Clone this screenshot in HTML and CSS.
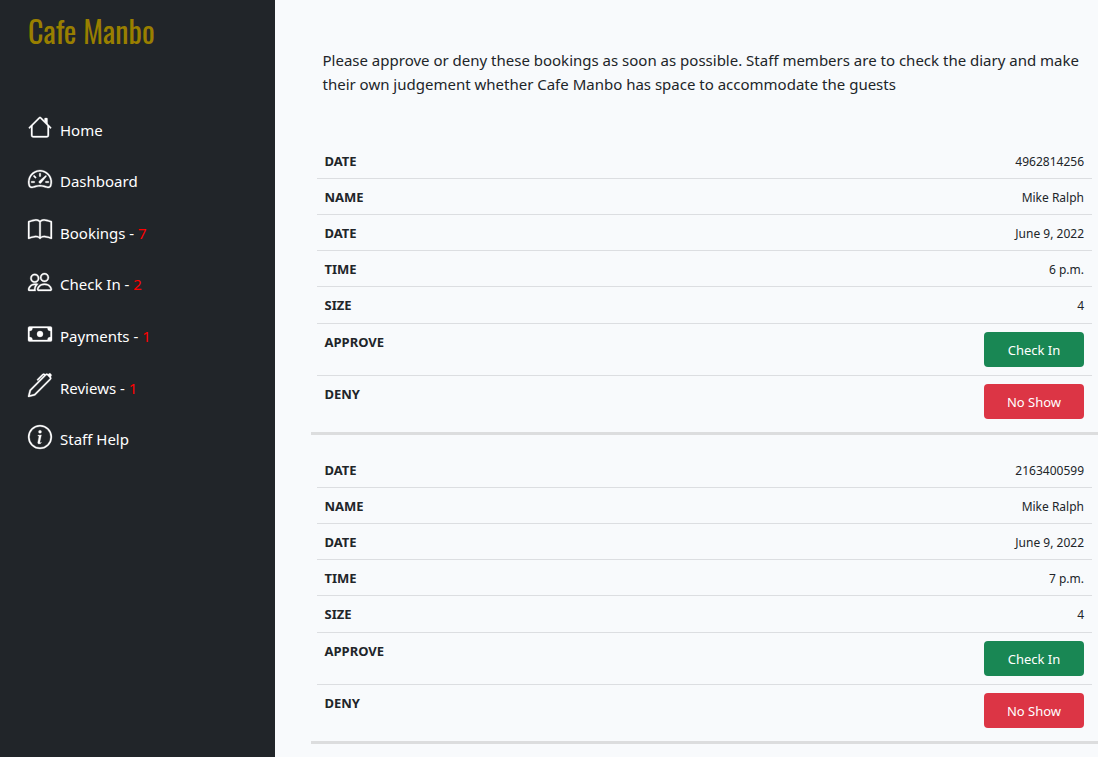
FILE: index.html
```html
<!DOCTYPE html>
<html lang="en">
<head>
<meta charset="utf-8">
<meta name="viewport" content="width=device-width, initial-scale=1">
<title>Cafe Manbo</title>
<link rel="stylesheet" href="styles.css">
</head>
<body class="page">
<aside class="sidebar">
  <a class="brand" href="#">Cafe Manbo</a>
  <nav>
    <ul class="menu">
      <li><a class="menu-link" href="#"><svg class="icon" viewBox="0 0 16 16" aria-hidden="true"><path fill-rule="evenodd" d="M2 13.5V7h1v6.500a.5.5 0 0 0 .5.5h9a.5.5 0 0 0 .5-.5V7h1v6.500a1.500 1.500 0 0 1-1.500 1.500h-9A1.500 1.500 0 0 1 2 13.500zm11-11V6l-2-2V2.500a.5.5 0 0 1 .5-.5h1a.5.5 0 0 1 .5.5z"/><path fill-rule="evenodd" d="M7.293 1.500a1 1 0 0 1 1.414 0l6.647 6.646a.5.5 0 0 1-.708.708L8 2.207 1.354 8.854a.5.5 0 1 1-.708-.708L7.293 1.500z"/></svg><span>Home</span></a></li>
      <li><a class="menu-link" href="#"><svg class="icon" viewBox="0 0 16 16" aria-hidden="true"><path d="M8 4a.5.5 0 0 1 .5.5V6a.5.5 0 0 1-1 0V4.500A.5.5 0 0 1 8 4zM3.732 5.732a.5.5 0 0 1 .707 0l.915.914a.5.5 0 1 1-.708.708l-.914-.915a.5.5 0 0 1 0-.707zM2 10a.5.5 0 0 1 .5-.5h1.586a.5.5 0 0 1 0 1H2.500A.5.5 0 0 1 2 10zm9.500 0a.5.5 0 0 1 .5-.5h1.500a.5.5 0 0 1 0 1H12a.5.5 0 0 1-.5-.5zm.754-4.246a.389.389 0 0 0-.527-.02L7.547 9.310a.91.91 0 1 0 1.302 1.258l3.434-4.297a.389.389 0 0 0-.029-.518z"/><path fill-rule="evenodd" d="M0 10a8 8 0 1 1 15.547 2.661c-.442 1.253-1.845 1.602-2.932 1.250C11.309 13.488 9.475 13 8 13c-1.474 0-3.310.488-4.615.911-1.087.352-2.490.003-2.932-1.250A7.988 7.988 0 0 1 0 10zm8-7a7 7 0 0 0-6.603 9.329c.203.575.923.876 1.680.630C4.397 12.533 6.358 12 8 12s3.604.532 4.923.960c.757.245 1.477-.056 1.680-.631A7 7 0 0 0 8 3z"/></svg><span>Dashboard</span></a></li>
      <li><a class="menu-link" href="#"><svg class="icon" viewBox="0 0 16 16" aria-hidden="true"><path d="M1 2.828c.885-.370 2.154-.769 3.388-.893 1.330-.134 2.458.063 3.112.752v9.746c-.935-.530-2.120-.603-3.213-.493-1.180.120-2.370.461-3.287.811V2.828zm7.500-.141c.654-.689 1.782-.886 3.112-.752 1.234.124 2.503.523 3.388.893v9.923c-.918-.350-2.107-.692-3.287-.810-1.094-.111-2.278-.039-3.213.492V2.687zM8 1.783C7.015.936 5.587.810 4.287.940c-1.514.153-3.042.672-3.994 1.105A.5.5 0 0 0 0 2.500v11a.5.5 0 0 0 .707.455c.882-.400 2.303-.881 3.680-1.020 1.409-.142 2.590.087 3.223.877a.5.5 0 0 0 .780 0c.633-.790 1.814-1.019 3.222-.877 1.378.139 2.800.620 3.681 1.020A.5.5 0 0 0 16 13.500v-11a.5.5 0 0 0-.293-.455c-.952-.433-2.480-.952-3.994-1.105C10.413.809 8.985.936 8 1.783z"/></svg><span>Bookings - <span class="count">7</span></span></a></li>
      <li><a class="menu-link" href="#"><svg class="icon" viewBox="0 0 16 16" aria-hidden="true"><path d="M15 14s1 0 1-1-1-4-5-4-5 3-5 4 1 1 1 1h8zm-7.978-1A.261.261 0 0 1 7 12.996c.001-.264.167-1.030.760-1.720C8.312 10.629 9.282 10 11 10c1.717 0 2.687.630 3.240 1.276.593.690.758 1.457.760 1.720l-.008.002a.274.274 0 0 1-.014.002H7.022zM11 7a2 2 0 1 0 0-4 2 2 0 0 0 0 4zm3-2a3 3 0 1 1-6 0 3 3 0 0 1 6 0zM6.936 9.280a5.880 5.880 0 0 0-1.230-.247A7.350 7.350 0 0 0 5 9c-4 0-5 3-5 4 0 .667.333 1 1 1h4.216A2.238 2.238 0 0 1 5 13c0-1.010.377-2.042 1.090-2.904.243-.294.526-.569.846-.816zM4.920 10A5.493 5.493 0 0 0 4 13H1c0-.260.164-1.030.760-1.724.545-.636 1.492-1.256 3.160-1.275zM1.500 5.500a3 3 0 1 1 6 0 3 3 0 0 1-6 0zm3-2a2 2 0 1 0 0 4 2 2 0 0 0 0-4z"/></svg><span>Check In - <span class="count">2</span></span></a></li>
      <li><a class="menu-link" href="#"><svg class="icon" viewBox="0 0 16 16" aria-hidden="true"><path d="M8 10a2 2 0 1 0 0-4 2 2 0 0 0 0 4z"/><path d="M0 4a1 1 0 0 1 1-1h14a1 1 0 0 1 1 1v8a1 1 0 0 1-1 1H1a1 1 0 0 1-1-1V4zm3 0a2 2 0 0 1-2 2v4a2 2 0 0 1 2 2h10a2 2 0 0 1 2-2V6a2 2 0 0 1-2-2H3z"/></svg><span>Payments - <span class="count">1</span></span></a></li>
      <li><a class="menu-link" href="#"><svg class="icon" viewBox="0 0 16 16" aria-hidden="true"><path d="m13.498.795.149-.149a1.207 1.207 0 1 1 1.707 1.708l-.149.148a1.500 1.500 0 0 1-.059 2.059L4.854 14.854a.5.5 0 0 1-.233.131l-4 1a.5.5 0 0 1-.606-.606l1-4a.5.5 0 0 1 .131-.232l9.642-9.642a.5.5 0 0 0-.642.056L6.854 4.854a.5.5 0 1 1-.708-.708L9.440.854A1.500 1.500 0 0 1 11.500.796a1.500 1.500 0 0 1 1.998-.001zm-.644.766a.5.5 0 0 0-.707 0L1.950 11.756l-.764 3.057 3.057-.764L14.440 3.854a.5.5 0 0 0 0-.708l-1.585-1.585z"/></svg><span>Reviews - <span class="count">1</span></span></a></li>
      <li><a class="menu-link" href="#"><svg class="icon" viewBox="0 0 16 16" aria-hidden="true"><path d="M8 15A7 7 0 1 1 8 1a7 7 0 0 1 0 14zm0 1A8 8 0 1 0 8 0a8 8 0 0 0 0 16z"/><path d="m8.930 6.588-2.290.287-.082.380.450.083c.294.070.352.176.288.469l-.738 3.468c-.194.897.105 1.319.808 1.319.545 0 1.178-.252 1.465-.598l.088-.416c-.200.176-.492.246-.686.246-.275 0-.375-.193-.304-.533L8.930 6.588zM9 4.500a1 1 0 1 1-2 0 1 1 0 0 1 2 0z"/></svg><span>Staff Help</span></a></li>
    </ul>
  </nav>
</aside>
<main class="content">
  <p class="intro">Please approve or deny these bookings as soon as possible. Staff members are to check the diary and make their own judgement whether Cafe Manbo has space to accommodate the guests</p>
  <section class="booking">
    <table class="details">
      <tr><th scope="row">DATE</th><td>4962814256</td></tr>
      <tr><th scope="row">NAME</th><td>Mike Ralph</td></tr>
      <tr><th scope="row">DATE</th><td>June 9, 2022</td></tr>
      <tr><th scope="row">TIME</th><td>6 p.m.</td></tr>
      <tr class="last-detail"><th scope="row">SIZE</th><td>4</td></tr>
      <tr class="action"><th scope="row">APPROVE</th><td><button class="btn btn-success" type="button">Check In</button></td></tr>
      <tr class="action"><th scope="row">DENY</th><td><button class="btn btn-danger" type="button">No Show</button></td></tr>
    </table>
  </section>
  <section class="booking">
    <table class="details">
      <tr><th scope="row">DATE</th><td>2163400599</td></tr>
      <tr><th scope="row">NAME</th><td>Mike Ralph</td></tr>
      <tr><th scope="row">DATE</th><td>June 9, 2022</td></tr>
      <tr><th scope="row">TIME</th><td>7 p.m.</td></tr>
      <tr class="last-detail"><th scope="row">SIZE</th><td>4</td></tr>
      <tr class="action"><th scope="row">APPROVE</th><td><button class="btn btn-success" type="button">Check In</button></td></tr>
      <tr class="action"><th scope="row">DENY</th><td><button class="btn btn-danger" type="button">No Show</button></td></tr>
    </table>
  </section>
</main>
</body>
</html>
```
FILE: styles.css
```css
* { box-sizing: border-box; }

.page {
  margin: 0;
  min-height: 100vh;
  display: grid;
  grid-template-columns: 25% 1fr;
  background: #f8fafc;
  color: #212529;
  font-family: "Segoe UI", "Noto Sans", "Open Sans", sans-serif;
  font-size: 15px;
  line-height: 24px;
}

.sidebar {
  background: #212529;
  padding: 8px 28px;
}

.brand {
  display: block;
  color: #997f00;
  font-family: "Oswald", "Roboto Condensed", "Liberation Sans Narrow", sans-serif;
  font-size: 30px;
  line-height: 46px;
  text-decoration: none;
  white-space: nowrap;
}

.menu {
  list-style: none;
  margin: 50px 0 0;
  padding: 0;
  height: 361px;
  display: grid;
  grid-auto-rows: 1fr;
}

.menu-link {
  display: flex;
  align-items: center;
  gap: 8px;
  height: 100%;
  color: #fff;
  text-decoration: none;
}

.icon {
  width: 24px;
  height: 24px;
  margin-bottom: 5px;
  overflow: visible;
  fill: currentColor;
  stroke: currentColor;
  stroke-width: 0.2;
}

.count { color: #f00; }

.content { padding: 48px 0 0 36px; }

.intro {
  margin: 0 0 47px;
  padding: 0 12px;
}

.booking {
  padding: 0 6px 4px;
  margin-bottom: 17px;
  border-bottom: 3px solid #dcddde;
}

.details {
  width: 100%;
  border-collapse: separate;
  border-spacing: 0;
  font-size: 12px;
  line-height: 19px;
}

.details th,
.details td {
  padding: 9px 8px 7px;
  border-bottom: 1px solid #dcdee1;
  vertical-align: top;
}

.details th {
  font-size: 13px;
  font-weight: 700;
  text-align: left;
}

.details td { text-align: right; }

.details .last-detail th,
.details .last-detail td { padding-bottom: 8px; }

.details .action td { padding: 8px; }

.details tr:last-child th,
.details tr:last-child td { border-bottom-color: transparent; }

.btn {
  display: block;
  width: 100px;
  margin-left: auto;
  padding: 9px 8px 7px;
  border: 0;
  border-radius: 4px;
  color: #fff;
  font-family: inherit;
  font-size: 13px;
  line-height: 19px;
  cursor: pointer;
}

.btn-success { background: #198754; }
.btn-danger { background: #dc3545; }
```
